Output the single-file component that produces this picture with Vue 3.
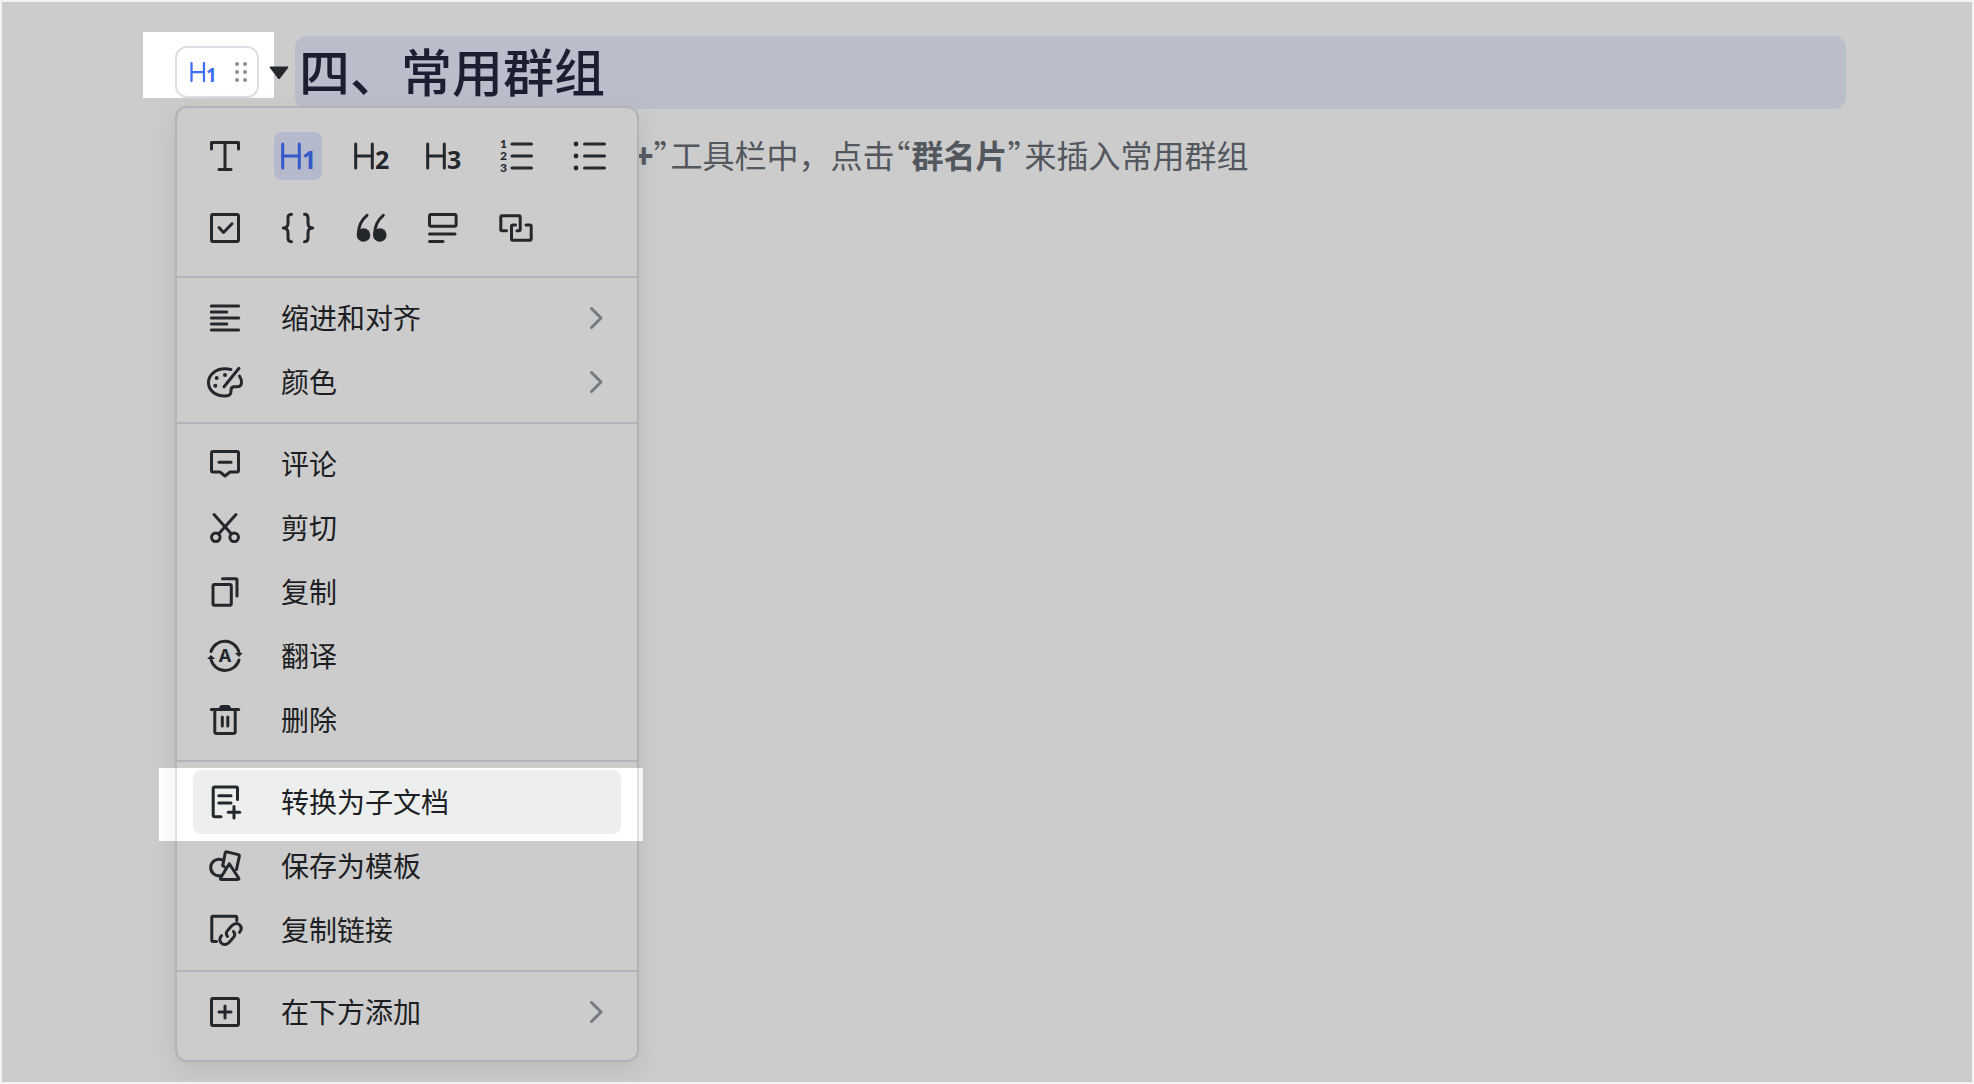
<script setup>
const blockTypes = [
  { id: 'text', label: '正文', paths: ['M10.5 17V10.5H37.5V17', 'M24 10.5V37.5', 'M18 37.5H30'] },
  { id: 'h1', label: '一级标题', digit: '1', active: true, paths: ['M8.7 12V36', 'M25.3 12V36', 'M8.7 24H25.3'] },
  { id: 'h2', label: '二级标题', digit: '2', paths: ['M8.7 12V36', 'M25.3 12V36', 'M8.7 24H25.3'] },
  { id: 'h3', label: '三级标题', digit: '3', paths: ['M8.7 12V36', 'M25.3 12V36', 'M8.7 24H25.3'] },
  { id: 'ol', label: '有序列表', numbers: true, paths: ['M20 12H39.5', 'M20 24H39.5', 'M20 36H39.5'] },
  { id: 'ul', label: '无序列表', dots: [[11, 12], [11, 24], [11, 36]], paths: ['M19.5 12H39.5', 'M19.5 24H39.5', 'M19.5 36H39.5'] },
  { id: 'todo', label: '任务', paths: ['M12 10.5H36A1.5 1.5 0 0 1 37.5 12V36A1.5 1.5 0 0 1 36 37.5H12A1.5 1.5 0 0 1 10.5 36V12A1.5 1.5 0 0 1 12 10.5Z', 'M18 23.5L22.5 28.5L31 19.8'] },
  { id: 'code', label: '代码块', paths: ['M17.5 10.3C14.8 10.3 14 11.8 14 14V19.5C14 22.3 12 24 9.3 24C12 24 14 25.7 14 28.5V34C14 36.2 14.8 37.7 17.5 37.7', 'M30.5 10.3C33.2 10.3 34 11.8 34 14V19.5C34 22.3 36 24 38.7 24C36 24 34 25.7 34 28.5V34C34 36.2 33.2 37.7 30.5 37.7'] },
  { id: 'quote', label: '引用', dots: [[16.5, 31, 6.8], [32.8, 31, 6.8]], paths: ['M20 11.3C13.5 16.5 11.3 23 11.3 30.5', 'M36.3 11.3C29.8 16.5 27.6 23 27.6 30.5'] },
  { id: 'callout', label: '高亮块', paths: ['M12 10.5H35.6A1.5 1.5 0 0 1 37.1 12V20.7A1.5 1.5 0 0 1 35.6 22.2H12A1.5 1.5 0 0 1 10.5 20.7V12A1.5 1.5 0 0 1 12 10.5Z', 'M10.5 30H36', 'M10.5 37.5H24'] },
  { id: 'sync', label: '同步块', paths: ['M14.5 26.8H10A1.2 1.2 0 0 1 8.8 25.6V13A1.2 1.2 0 0 1 10 11.8H27A1.2 1.2 0 0 1 28.2 13V25.6A1.2 1.2 0 0 1 27 26.8H25', 'M23.5 21H20.7A1.2 1.2 0 0 0 19.5 22.2V35A1.2 1.2 0 0 0 20.7 36.2H38A1.2 1.2 0 0 0 39.2 35V22.2A1.2 1.2 0 0 0 38 21H34'] },
]

const groups = [
  [
    { label: '缩进和对齐', submenu: true, paths: ['M10.3 12H37.7', 'M10.3 18H25.8', 'M10.3 24H37.7', 'M10.3 30H25.8', 'M10.3 36H37.7'] },
    { label: '颜色', submenu: true, dots: [[15.7, 20, 2], [24, 17, 2], [14.3, 27.7, 2]], paths: ['M30 11.5C28 11 26 10.7 24 10.7C14.5 10.7 7.5 17 7.5 24.5C7.5 32.5 14.5 38 23.5 38C28 38 30 37 30 33.5V32C30 29.8 31.5 28.8 33.5 28.8H36C39 28.8 40.5 27 40.5 24.5C40.5 22 39.8 20 38.5 18', 'M38 10.3L23 28.8'] },
  ],
  [
    { label: '评论', paths: ['M12 11.5H36A1.5 1.5 0 0 1 37.5 13V30.5A1.5 1.5 0 0 1 36 32H29L24 36L19 32H12A1.5 1.5 0 0 1 10.5 30.5V13A1.5 1.5 0 0 1 12 11.5Z', 'M18 22.3H30'] },
    { label: '剪切', paths: ['M35 10.5L17.5 30', 'M13 10.5L30.5 30', 'M10.5 33.3A4.3 4.3 0 1 0 19.1 33.3A4.3 4.3 0 1 0 10.5 33.3', 'M28.9 33.3A4.3 4.3 0 1 0 37.5 33.3A4.3 4.3 0 1 0 28.9 33.3'] },
    { label: '复制', paths: ['M13.3 16.5H29A1.3 1.3 0 0 1 30.3 17.8V36A1.3 1.3 0 0 1 29 37.3H13.3A1.3 1.3 0 0 1 12 36V17.8A1.3 1.3 0 0 1 13.3 16.5Z', 'M21.5 10.7H34.7A1.3 1.3 0 0 1 36 12V28'] },
    { label: '翻译', letter: 'A', fill: 'M33.8 21H41.7L38 25ZM6 27H14.2L10 23Z', paths: ['M10 19.5A14.5 14.5 0 0 1 38 20.5', 'M10 27.5A14.5 14.5 0 0 0 38 28'] },
    { label: '删除', fill: 'M18 13.5V11.5C19 9.5 20 9 21.5 9H26.5C28 9 29 9.5 30 11.5V13.5Z', paths: ['M10.3 13.5H37.7', 'M13.8 13.5V36.2A1.2 1.2 0 0 0 15 37.4H33A1.2 1.2 0 0 0 34.2 36.2V13.5', 'M21.3 21V30', 'M26.8 21V30'] },
  ],
  [
    { label: '转换为子文档', active: true, paths: ['M20 38.7H13.5A1.3 1.3 0 0 1 12.2 37.4V10.3A1.3 1.3 0 0 1 13.5 9H35.2A1.3 1.3 0 0 1 36.5 10.3V21.5', 'M17.8 17.7H30', 'M17.8 25H30', 'M33 28.5V40', 'M27.3 34.3H38.7'] },
    { label: '保存为模板', paths: ['M21 17.8A8.3 8.3 0 1 0 20 33.6', 'M21.8 23.5L24.2 11Q24.6 9.6 26 9.9L37.2 12.6Q38.6 13 38.3 14.4L35.5 27.5', 'M28.3 21.8L19.6 36Q19 37.4 20.3 37.4H36.8Q38.6 37.4 37.6 36Z', 'M21.8 23.5L23.5 25'] },
    { label: '复制链接', paths: ['M15.5 35.5H12A1.2 1.2 0 0 1 10.8 34.3V11.5A1.2 1.2 0 0 1 12 10.3H34.6A1.2 1.2 0 0 1 35.8 11.5V14.5', 'M26.5 30.5C24.5 28 25 26 27 24L31 19.5C34 16.5 37.5 17 39.2 19.5C41 22 40 24.5 38.5 26.3', 'M32.5 25.5C34.5 28 34 30 32 32L28 36.5C25 39.5 21.5 39 19.8 36.5C18 34 19 31.5 20.5 29.7'] },
  ],
  [
    { label: '在下方添加', submenu: true, paths: ['M12 10.5H36A1.5 1.5 0 0 1 37.5 12V36A1.5 1.5 0 0 1 36 37.5H12A1.5 1.5 0 0 1 10.5 36V12A1.5 1.5 0 0 1 12 10.5Z', 'M24 18V30', 'M18 24H30'] },
  ],
]
</script>

<template>
  <main class="page">
    <section class="heading-block">
      <div class="gutter">
        <button class="handle" type="button" aria-label="一级标题">
          <svg class="handle-type" viewBox="0 0 48 48" aria-hidden="true">
            <path class="stroke" d="M8.7 12V36M25.3 12V36M8.7 24H25.3" />
            <text class="digit" x="28" y="37">1</text>
          </svg>
          <svg class="handle-grip" viewBox="0 0 14 24" aria-hidden="true">
            <circle v-for="n in 6" :key="n" :cx="n % 2 ? 3 : 11" :cy="4 + Math.floor((n - 1) / 2) * 8" r="2" />
          </svg>
        </button>

        <div class="menu" role="menu">
          <div class="types">
            <button
              v-for="type in blockTypes"
              :key="type.id"
              type="button"
              class="type"
              :class="{ 'type-active': type.active }"
              :aria-label="type.label"
            >
              <svg class="icon" viewBox="0 0 48 48" aria-hidden="true">
                <path v-for="d in type.paths" :key="d" class="stroke" :d="d" />
                <circle v-for="dot in type.dots" :key="dot.join()" class="solid" :cx="dot[0]" :cy="dot[1]" :r="dot[2] || 2.4" />
                <text v-if="type.digit" class="digit" x="28" y="37">{{ type.digit }}</text>
                <template v-if="type.numbers">
                  <text v-for="n in 3" :key="n" class="number" x="8" :y="4 + n * 12">{{ n }}</text>
                </template>
              </svg>
            </button>
          </div>

          <div v-for="(group, index) in groups" :key="index" class="group">
            <button
              v-for="item in group"
              :key="item.label"
              type="button"
              role="menuitem"
              class="item"
              :class="{ 'item-active': item.active }"
            >
              <svg class="icon" viewBox="0 0 48 48" aria-hidden="true">
                <path v-for="d in item.paths" :key="d" class="stroke" :d="d" />
                <path v-if="item.fill" class="solid" :d="item.fill" />
                <circle v-for="dot in item.dots" :key="dot.join()" class="solid" :cx="dot[0]" :cy="dot[1]" :r="dot[2]" />
                <text v-if="item.letter" class="letter" x="24" y="30">{{ item.letter }}</text>
              </svg>
              <span class="item-label">{{ item.label }}</span>
              <svg v-if="item.submenu" class="chevron" viewBox="0 0 32 32" aria-hidden="true">
                <path d="M10.5 6.5L20 16L10.5 25.5" />
              </svg>
            </button>
          </div>
        </div>
      </div>

      <button class="fold" type="button" aria-label="折叠">
        <svg viewBox="0 0 20 14" aria-hidden="true"><path d="M1 0.5H19Q19.8 1 19 2L11 12.5Q10 13.6 9 12.5L1 2Q0.2 1 1 0.5Z" /></svg>
      </button>
      <h1 class="title">四、常用群组</h1>
    </section>

    <p class="body"><b class="plus">+</b><span class="mark">”</span>工具栏中，点击<span class="mark">“</span><b>群名片</b><span class="mark">”</span>来插入常用群组</p>
  </main>
</template>

<style>
body {
  margin: 0;
}
</style>

<style scoped>
.page {
  box-sizing: border-box;
  min-height: 100vh;
  padding: 30px 126px 0 141px;
  border: 2px solid #f2f2f2;
  background: radial-gradient(circle 86px at right 194px bottom -56px, #cbcbcb 98%, transparent) no-repeat, #cccccc;
  color: #1c1e23;
  font-family: "Noto Sans CJK SC", sans-serif;
  overflow: hidden;
}

button {
  margin: 0;
  padding: 0;
  border: 0;
  background: none;
  color: inherit;
  font: inherit;
  cursor: pointer;
}

svg {
  display: block;
  flex: none;
}

.heading-block {
  display: flex;
  align-items: flex-start;
}

.gutter {
  position: relative;
  z-index: 1;
  box-sizing: border-box;
  flex: none;
  width: 131px;
  height: 66px;
  padding: 14px 0 0 32px;
  background: #ffffff;
}

.handle {
  display: flex;
  align-items: center;
  box-sizing: border-box;
  width: 84px;
  height: 52px;
  padding-left: 8px;
  gap: 13px;
  border: 2px solid #dedfe4;
  border-radius: 12px;
  background: #ffffff;
  color: #3f6df2;
}

.handle-type {
  width: 36px;
  height: 36px;
  overflow: visible;
}

.handle-grip {
  width: 14px;
  height: 24px;
  fill: #8d9199;
}

.fold {
  position: relative;
  z-index: 1;
  flex: none;
  width: 21px;
  margin-top: 34px;
}

.fold svg {
  width: 20px;
  height: 14px;
  margin-left: -5px;
  fill: #24282c;
}

.title {
  flex: 1;
  box-sizing: border-box;
  min-height: 73px;
  margin: 4px 0 0;
  padding: 0 4px;
  border-radius: 12px;
  background: #babeca;
  color: #1a1f31;
  font-size: 51px;
  font-weight: 500;
  line-height: 68px;
}

.body {
  margin: 21px 0 0 491px;
  color: #53575e;
  font-size: 32px;
  line-height: 48px;
}

.plus {
  font-weight: 900;
}

.mark {
  margin-right: 1px;
  font-feature-settings: "halt";
}

.menu {
  position: absolute;
  top: 74px;
  left: 32px;
  box-sizing: border-box;
  width: 464px;
  padding-bottom: 8px;
  border: 2px solid #b2b3b9;
  border-radius: 12px;
  background: #cccccc;
  box-shadow: 0 8px 24px rgba(110, 120, 120, 0.2);
  color: #24282c;
}

.types {
  display: grid;
  grid-template-columns: repeat(6, 48px);
  justify-content: space-between;
  row-gap: 24px;
  padding: 24px;
}

.type {
  width: 48px;
  height: 48px;
  border-radius: 8px;
}

.type-active {
  background: #b4bacb;
  color: #3459c8;
}

.icon {
  width: 48px;
  height: 48px;
}

.stroke {
  fill: none;
  stroke: currentColor;
  stroke-width: 3;
  stroke-linecap: round;
  stroke-linejoin: round;
}

.solid {
  fill: currentColor;
}

.digit,
.letter {
  fill: currentColor;
  font-family: "Noto Sans", sans-serif;
  font-weight: 700;
}

.digit {
  font-size: 25px;
}

.number {
  fill: currentColor;
  font-family: Lato, sans-serif;
  font-size: 12px;
  font-weight: 900;
}

.letter {
  font-size: 18px;
  text-anchor: middle;
}

.group {
  padding: 8px 16px;
  border-top: 2px solid #b2b3b9;
}

.item {
  position: relative;
  z-index: 0;
  display: flex;
  align-items: center;
  width: 100%;
  height: 64px;
  padding: 0 8px;
  text-align: left;
}

.item-label {
  flex: 1;
  margin-left: 32px;
  padding-bottom: 2px;
  color: #1c1e23;
  font-size: 28px;
  line-height: 40px;
}

.item-active::before,
.item-active::after {
  content: "";
  position: absolute;
  z-index: -1;
}

.item-active::before {
  inset: -2px -22px -7px -34px;
  background: linear-gradient(
    90deg,
    #ffffff,
    #f5f6f6 16px,
    #dfe0e6 16px 18px,
    #ffffff 18px calc(100% - 6px),
    #dfe0e6 calc(100% - 6px) calc(100% - 4px),
    #f7f7f7 calc(100% - 4px)
  );
}

.item-active::after {
  inset: 0;
  border-radius: 8px;
  background: #edefee;
}

.chevron {
  width: 32px;
  height: 32px;
  fill: none;
  stroke: #757b82;
  stroke-width: 3;
  stroke-linecap: round;
  stroke-linejoin: round;
}
</style>
